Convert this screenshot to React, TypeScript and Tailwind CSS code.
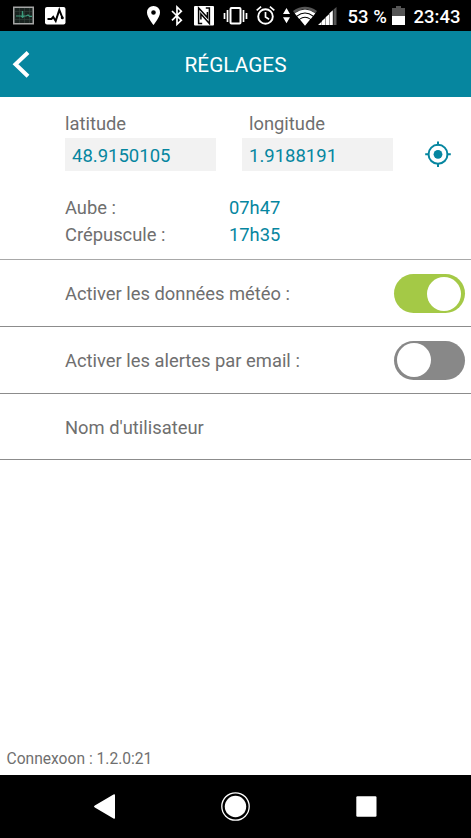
import type { ReactNode } from "react";

function StatusIcon({ width, className = "", children }: { width: number; className?: string; children: ReactNode }) {
  return (
    <svg width={width} height="31" viewBox={`0 0 ${width} 31`} className={`shrink-0 ${className}`} fill="#fff">
      {children}
    </svg>
  );
}

function StatusBar() {
  return (
    <div className="flex h-[31px] shrink-0 items-center bg-black pl-[13px] text-[18.5px] font-medium text-white">
      <StatusIcon width={21}>
        <rect x=".75" y="7.25" width="19.5" height="16.5" fill="#18221f" stroke="#a5a5a5" strokeWidth="1.5" />
        <path d="M6.5 8v15M11.5 8v15M16.5 8v15M2 11.5h17M2 19.5h17" stroke="#34443e" strokeWidth=".6" />
        <path d="M3 16h5l1.2 1 .3-6 .6 6 1-1h2l2-1 1.5 1.4H19" fill="none" stroke="#3c9a7c" strokeWidth="1.2" />
      </StatusIcon>
      <StatusIcon width={21} className="ml-[11px]">
        <rect x="0" y="7" width="20.5" height="17.5" rx="2" />
        <path d="M2.5 19h4l1.7-2 2.5 4L14.3 10l3 7.5" fill="none" stroke="#000" strokeWidth="2" />
        <circle cx="17.3" cy="17.8" r="1.5" fill="#000" />
      </StatusIcon>
      <StatusIcon width={13} className="ml-[81px]">
        <path fillRule="evenodd" d="M6.5 6A6.4 6.4 0 0 0 0 12.5C0 17.2 6.5 25 6.5 25S13 17.2 13 12.5A6.4 6.4 0 0 0 6.5 6Zm0 4.2a2.3 2.3 0 1 1 0 4.6 2.3 2.3 0 0 1 0-4.6Z" />
      </StatusIcon>
      <StatusIcon width={12} className="ml-[11px]">
        <path d="m1 11 9.3 9.2L6 24.3V7l4.3 4.2L1 20.4" fill="none" stroke="#fff" strokeWidth="1.7" />
      </StatusIcon>
      <StatusIcon width={20} className="ml-[11px]">
        <rect y="6" width="20" height="19.5" rx="1" />
        <path d="M8.2 23.5H4.6V8l8.8 9.5V12M11.8 8h3.6v15.5L6.9 14v5.5" fill="none" stroke="#000" strokeWidth="1.5" />
      </StatusIcon>
      <StatusIcon width={25} className="ml-[9px]">
        <rect x="7.5" y="8" width="10" height="15.5" rx="1" fill="none" stroke="#fff" strokeWidth="2" />
        <path d="M4.5 10v12M1.5 13v6M20.5 10v12M23.5 13v6" stroke="#fff" strokeWidth="1.7" />
      </StatusIcon>
      <StatusIcon width={20} className="ml-[8px]">
        <circle cx="9.5" cy="16.5" r="7.3" fill="none" stroke="#fff" strokeWidth="1.9" />
        <path d="m.7 10.4 4.4-3.7M18.3 10.4l-4.4-3.7M9.5 12v5l3.6 2.2" fill="none" stroke="#fff" strokeWidth="1.7" />
      </StatusIcon>
      <StatusIcon width={8} className="ml-[7px]">
        <path d="M3.5 8 7 14H0ZM0 17.3h7L3.5 23.3Z" />
      </StatusIcon>
      <StatusIcon width={24} className="ml-[2px]">
        <path d="M0 11Q12 2.6 24 11l-1.6 2.2Q12 5.5 1.6 13.2Z" fill="#555" />
        <path d="m1.7 13.3 1.8 2.5Q12 9 20.5 15.8l1.8-2.5Q12 5.9 1.7 13.3Z" />
        <path d="M4.2 16.5 6.2 19Q12 14.7 17.8 19l2-2.5Q12 10.6 4.2 16.5ZM6.9 19.6 12 25.7 17.1 19.6Q12 15.9 6.9 19.6Z" />
      </StatusIcon>
      <StatusIcon width={19} className="ml-[1px]">
        <path d="M15.5 9.5 18.5 7v18h-3Z" fill="#555" />
        <path d="M0 25 3.5 21.7V25ZM3.8 21l3.4-3v7H3.8ZM7.6 17.2l3.4-3V25H7.6ZM11.4 13.3l3.4-3V25h-3.4Z" />
      </StatusIcon>
      <span className="ml-[10.6px] w-[39.4px] whitespace-nowrap pt-[3px] leading-[33px]">53 %</span>
      <StatusIcon width={13} className="ml-[5px]">
        <path d="M0 8h4V6h5v2h4v8H0Z" fill="#555" />
        <path d="M0 16h13v9H0Z" />
      </StatusIcon>
      <span className="ml-[8.6px] whitespace-nowrap pt-[3px] leading-[33px]">23:43</span>
    </div>
  );
}

function Toggle({ on }: { on: boolean }) {
  return (
    <button
      role="switch"
      aria-checked={on}
      className={`mt-px flex h-[39px] w-[71px] items-center rounded-full px-[3.5px] ${on ? "justify-end bg-[#a4c946]" : "justify-start bg-[#888]"}`}
    >
      <span className="size-[34px] rounded-full bg-white" />
    </button>
  );
}

function Row({ label, children }: { label: string; children?: ReactNode }) {
  return (
    <div className="flex h-[66.6px] items-center justify-between border-b border-[#8c8c8c] pl-[65px] pr-[6.4px]">
      <span className="pt-[2px]">{label}</span>
      {children}
    </div>
  );
}

function Coordinate({ label, value }: { label: string; value: string }) {
  return (
    <label className="block w-[151px]">
      <span className="block h-[26px] leading-[26px]">{label}</span>
      <span className="mt-px flex h-[33px] bg-[#f2f2f2] pl-[7px] pt-px text-[18.5px] leading-[34px] text-[#0686a0]">{value}</span>
    </label>
  );
}

export default function App() {
  return (
    <div className="flex h-[838px] w-[471px] flex-col overflow-hidden bg-white font-['Roboto',sans-serif] text-[18.35px] text-[#6f6f6f]">
      <StatusBar />
      <header className="flex h-[66px] shrink-0 bg-[#06869f] text-white">
        <svg width="60" height="66" viewBox="0 0 60 66" fill="none" stroke="#fff" strokeWidth="4">
          <path d="M28 21.5 15.5 33.2l12.5 12" />
        </svg>
        <h1 className="flex-1 pr-[60px] pt-px text-center text-[20.8px] leading-[66px]">RÉGLAGES</h1>
      </header>

      <main className="flex flex-1 flex-col">
        <section className="h-[163.4px] border-b border-[#a8a8a8] pl-[65px] pt-[14px]">
          <div className="flex">
            <Coordinate label="latitude" value="48.9150105" />
            <div className="ml-[26px] [&_label>span:first-child]:pl-[7px]">
              <Coordinate label="longitude" value="1.9188191" />
            </div>
            <svg width="26" height="26" viewBox="0 0 26 26" className="ml-[32px] mt-[30px]" fill="none" stroke="#0686a0" strokeWidth="2">
              <circle cx="13" cy="13.3" r="9.5" />
              <path d="M13 .5v4M13 22v4M.2 13.3h4M21.8 13.3h4" />
              <circle cx="13" cy="13.3" r="4.4" fill="#0686a0" stroke="none" />
            </svg>
          </div>
          <dl className="mt-[23px] grid grid-cols-[164px_1fr] leading-[27px]">
            <dt>Aube :</dt>
            <dd className="text-[#0686a0]">07h47</dd>
            <dt>Crépuscule :</dt>
            <dd className="text-[#0686a0]">17h35</dd>
          </dl>
        </section>
        <Row label="Activer les données météo :">
          <Toggle on />
        </Row>
        <Row label="Activer les alertes par email :">
          <Toggle on={false} />
        </Row>
        <Row label="Nom d'utilisateur" />
        <footer className="mt-auto pb-[4px] pl-[6.5px] text-[15.6px] leading-[24px]">Connexoon : 1.2.0:21</footer>
      </main>

      <nav className="flex h-[63px] shrink-0 items-center bg-black">
        <svg width="471" height="63" viewBox="0 0 471 63" fill="#fff">
          <path d="M94.8 30.4 113.5 19.6q1.5-.8 1.5.8v22.4q0 1.5-1.5.7L94.8 32.6q-1.8-1.1 0-2.2Z" />
          <circle cx="235.5" cy="31.5" r="10.7" />
          <circle cx="235.5" cy="31.5" r="13.7" fill="none" stroke="#fff" strokeWidth="1.3" />
          <rect x="356.3" y="21.3" width="20.2" height="20.4" rx="1.2" />
        </svg>
      </nav>
    </div>
  );
}
